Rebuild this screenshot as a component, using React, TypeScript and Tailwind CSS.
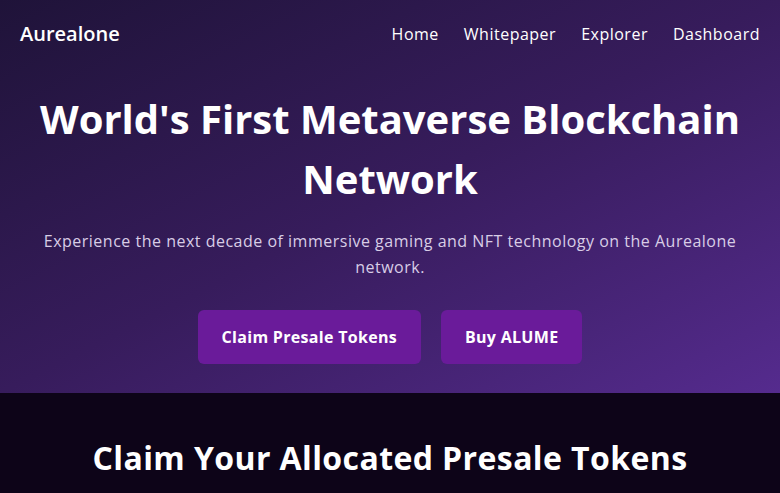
export default function App() {
  return (
    <div className="h-screen overflow-y-scroll bg-[#0d0418] font-['Open_Sans',sans-serif] text-white [&::-webkit-scrollbar]:w-[15px] [&::-webkit-scrollbar]:bg-[#f1f1f1] [&::-webkit-scrollbar-thumb]:rounded-full [&::-webkit-scrollbar-thumb]:border-[3px] [&::-webkit-scrollbar-thumb]:border-solid [&::-webkit-scrollbar-thumb]:border-[#f1f1f1] [&::-webkit-scrollbar-thumb]:bg-[#8f8f8f]">
      {/* HERO */}
      <section className="bg-gradient-to-br from-[#1f1339] via-[#371c5c] to-[#552b8e]">
        <header className="flex items-center justify-between px-5 py-5">
          <span className="text-xl leading-7 font-semibold">Aurealone</span>
          <nav className="flex gap-[25px] text-base leading-7 tracking-[0.5px]">
            <a href="#">Home</a>
            <a href="#">Whitepaper</a>
            <a href="#">Explorer</a>
            <a href="#">Dashboard</a>
          </nav>
        </header>

        <div className="flex flex-col items-center px-5 pt-[21px] pb-[29px] text-center">
          <h1 className="text-[40px] leading-[60px] font-bold">
            World's First Metaverse Blockchain Network
          </h1>
          <p className="mt-[19px] text-base leading-[26px] tracking-[0.5px] text-[#d8cde6]">
            Experience the next decade of immersive gaming and NFT technology on the Aurealone
            network.
          </p>
          <div className="mt-[30px] flex gap-5">
            <button className="rounded-md bg-[#6a1b9a] px-6 py-4 text-base leading-[22px] font-bold tracking-[0.3px]">
              Claim Presale Tokens
            </button>
            <button className="rounded-md bg-[#6a1b9a] px-6 py-4 text-base leading-[22px] font-bold tracking-[0.3px]">
              Buy ALUME
            </button>
          </div>
        </div>
      </section>

      {/* CLAIM */}
      <section className="flex flex-col items-center px-5 pt-[41px] pb-16 text-center">
        <h2 className="text-[32px] leading-[48px] font-bold tracking-[0.4px]">
          Claim Your Allocated Presale Tokens
        </h2>
        <p className="mt-6 max-w-xl text-base leading-[26px] text-[#b9aecb]">
          Connect the wallet you used during the presale to view and claim your ALUME allocation.
        </p>

        <div className="mt-10 w-full max-w-md rounded-lg bg-[#1a0d2e] p-6 text-left">
          <div className="flex justify-between text-sm text-[#b9aecb]">
            <span>Allocated</span>
            <span className="text-white">0 ALUME</span>
          </div>
          <div className="mt-3 flex justify-between text-sm text-[#b9aecb]">
            <span>Claimed</span>
            <span className="text-white">0 ALUME</span>
          </div>
          <button className="mt-6 w-full rounded-md bg-[#6a1b9a] py-4 text-base leading-[22px] font-bold">
            Connect Wallet
          </button>
        </div>
      </section>
    </div>
  );
}
